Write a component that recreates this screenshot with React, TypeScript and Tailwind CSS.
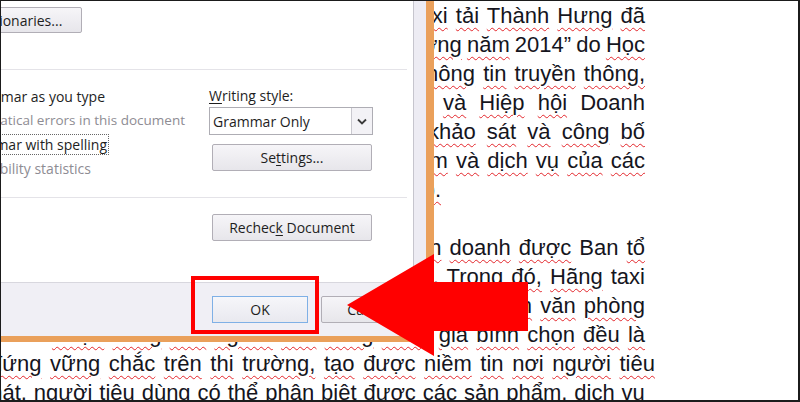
import React from 'react'

// spell-check squiggle under a word
const sq = 'underline decoration-wavy decoration-[#e3262b] decoration-1 underline-offset-[4px]'

interface LineProps {
  text: string
  plain?: string[]
  className?: string
}

/** right-aligned line of the document, left part hidden behind the dialog */
const RLine: React.FC<LineProps> = ({ text, plain = [], className = 'w-[644px] [word-spacing:2px]' }) => (
  <div className={`h-[29px] flex justify-end ${className}`}>
    <span className="whitespace-nowrap shrink-0">
      {text.split(' ').map((w, i) => (
        <React.Fragment key={i}>
          {i > 0 && ' '}
          <span className={plain.includes(w) ? '' : sq}>{w}</span>
        </React.Fragment>
      ))}
    </span>
  </div>
)

/** justified full-width line */
const JLine: React.FC<LineProps> = ({ text, plain = [], className = '' }) => (
  <div className={`h-[29px] flex justify-between whitespace-nowrap ${className}`}>
    {text.split(' ').map((w, i) => (
      <span key={i} className={plain.includes(w) ? '' : sq}>
        {w}
      </span>
    ))}
  </div>
)

const DocText = () => (
  <div className="flex flex-col font-['Liberation_Sans',Arial,sans-serif] text-[22px] leading-[29px] text-[#15151d]">
    <RLine text="Năm 2014, Công ty cổ phần taxi tải Thành Hưng đã" />
    <RLine
      text="vinh dự nhận danh hiệu “Thương hiệu uy tín chất lượng năm 2014” do Học"
      plain={['2014”', 'do']}
      className="w-[644px] [word-spacing:-1px]"
    />
    <RLine text="viện Công nghệ Bưu chính Viễn thông, Bộ Thông tin truyền thông," />
    <RLine text="Viện Nghiên cứu Kinh tế và Hiệp hội Doanh" plain={['Doanh']} className="w-[644px] [word-spacing:7px]" />
    <RLine text="nghiệp Việt Nam phối hợp tổ chức khảo sát và công bố" className="w-[644px] [word-spacing:5px]" />
    <RLine text="dựa trên kết quả đánh giá chất lượng sản phẩm và dịch vụ của các" />
    <RLine text="doanh nghiệp." className="w-[440px]" />
    <div className="h-[29px]" />
    <RLine text="Đây là giải thưởng thường niên dành cho các doanh nghiệp kinh doanh được Ban tổ" plain={['Ban']} />
    <RLine text="chức đánh giá cao về chất lượng dịch vụ. Trong đó, Hãng taxi" plain={['taxi']} />
    <RLine text="tải Thành Hưng là một trong số ít doanh nghiệp dịch vụ chuyển văn phòng" />
    <RLine text="được đông đảo người tiêu dùng tham gia bình chọn đều là" />
    <JLine text="đứng vững chắc trên thi trường, tạo được niềm tin nơi người tiêu" className="-ml-[11px] w-[665px]" />
    <JLine text="phát, người tiêu dùng có thể phân biệt được các sản phẩm, dịch vụ" className="-ml-[23px] w-[667px]" />
  </div>
)

const btn =
  'flex items-center justify-center border border-[#b1aeb6] bg-linear-to-b from-[#f6f5f8] to-[#e7e6eb] rounded-[2px] whitespace-nowrap'

/** row of the left column, text pinned to its right end so the start runs off the panel */
const OptRow: React.FC<{ end: string; children: React.ReactNode }> = ({ end, children }) => (
  <div className={`h-[24px] flex items-center justify-end ${end}`}>{children}</div>
)

const ProofingDialog = () => (
  <div className="absolute left-0 top-0 w-[433px] h-[341px] flex flex-col border-r-[8px] border-b-[6px] border-[#eaa05b] bg-[#f0eff5] font-['Open_Sans',sans-serif] text-[14px] text-[#1e1e1e]">
    <div className="flex h-[281px]">
      {/* content panel */}
      <div className="w-[412px] h-full bg-white overflow-hidden flex flex-col pt-[6px]">
        <div className="h-[26px] w-[81px] flex justify-end">
          <button className={`${btn} shrink-0 w-[182px] h-[26px]`}>Custom Dictionaries...</button>
        </div>

        <div className="mt-[36px] h-px w-[406px] bg-[#e4e3e8]" />

        <div className="mt-[14px] grid grid-cols-[208px_1fr]">
          <div className="flex flex-col">
            <OptRow end="w-[104px]">
              <span className="shrink-0">Check grammar as you type</span>
            </OptRow>
            <OptRow end="w-[184px]">
              <span className="shrink-0 text-[13.5px] text-[#8e8c93]">Hide grammatical errors in this document</span>
            </OptRow>
            <OptRow end="w-[108px]">
              <span className="shrink-0 border border-dotted border-[#666] px-[1px] leading-[19px]">
                Check grammar with spelling
              </span>
            </OptRow>
            <OptRow end="w-[90px]">
              <span className="shrink-0 text-[#8e8c93]">Show readability statistics</span>
            </OptRow>
          </div>

          <div className="flex flex-col">
            <div className="h-[23px] flex items-center">
              <span>
                <span className="underline underline-offset-2">W</span>riting style:
              </span>
            </div>
            <div className="h-[28px] w-[164px] flex border border-[#aeadb4] bg-white">
              <div className="flex-1 flex items-center pl-[3px]">Grammar Only</div>
              <div className="w-[21px] flex items-center justify-center border-l border-[#c9c8cf] bg-[#f3f2f6]">
                <svg width="10" height="7" viewBox="0 0 10 7">
                  <path d="M1 1.5 L5 5.5 L9 1.5" fill="none" stroke="#3a3a3a" strokeWidth="1.8" />
                </svg>
              </div>
            </div>
            <button className={`${btn} mt-[9px] ml-[3px] w-[160px] h-[27px]`}>
              <span>
                Se<span className="underline underline-offset-2">t</span>tings...
              </span>
            </button>
          </div>
        </div>

        <div className="mt-[17px] h-px w-[406px] bg-[#e4e3e8]" />

        <button className={`${btn} mt-[16px] ml-[211px] w-[160px] h-[27px]`}>
          <span>
            Rechec<span className="underline underline-offset-2">k</span> Document
          </span>
        </button>
      </div>
      {/* scroll track */}
      <div className="w-px bg-[#c6c5cd]" />
      <div className="flex-1 bg-[#edecf3]" />
    </div>

    {/* footer */}
    <div className="flex-1 border-t border-[#d8d7de] flex items-center">
      <button className="ml-[211px] w-[96px] h-[27px] flex items-center justify-center border border-[#7fb0e6] bg-linear-to-b from-[#f6f6fa] to-[#e9e9ef]">
        OK
      </button>
      <button className={`${btn} ml-[13px] w-[96px] h-[27px]`}>Cancel</button>
    </div>
  </div>
)

const RedArrow = () => (
  <svg className="absolute left-0 top-0" width="797" height="399" viewBox="0 0 797 399">
    <polygon points="346,304 433,253 433,281 527,281 527,330 433,330 433,355" fill="#ff0000" />
  </svg>
)

export default function App() {
  return (
    <div className="w-[800px] h-[402px] border-t border-l border-r-2 border-b-2 border-[#1b1b1b] bg-white">
      <div className="relative w-full h-full overflow-hidden bg-white">
        <DocText />
        <ProofingDialog />
        {/* highlight round the OK button */}
        <div className="absolute left-[190px] top-[275px] w-[128px] h-[58px] border-4 border-[#ff0000]" />
        <RedArrow />
      </div>
    </div>
  )
}
